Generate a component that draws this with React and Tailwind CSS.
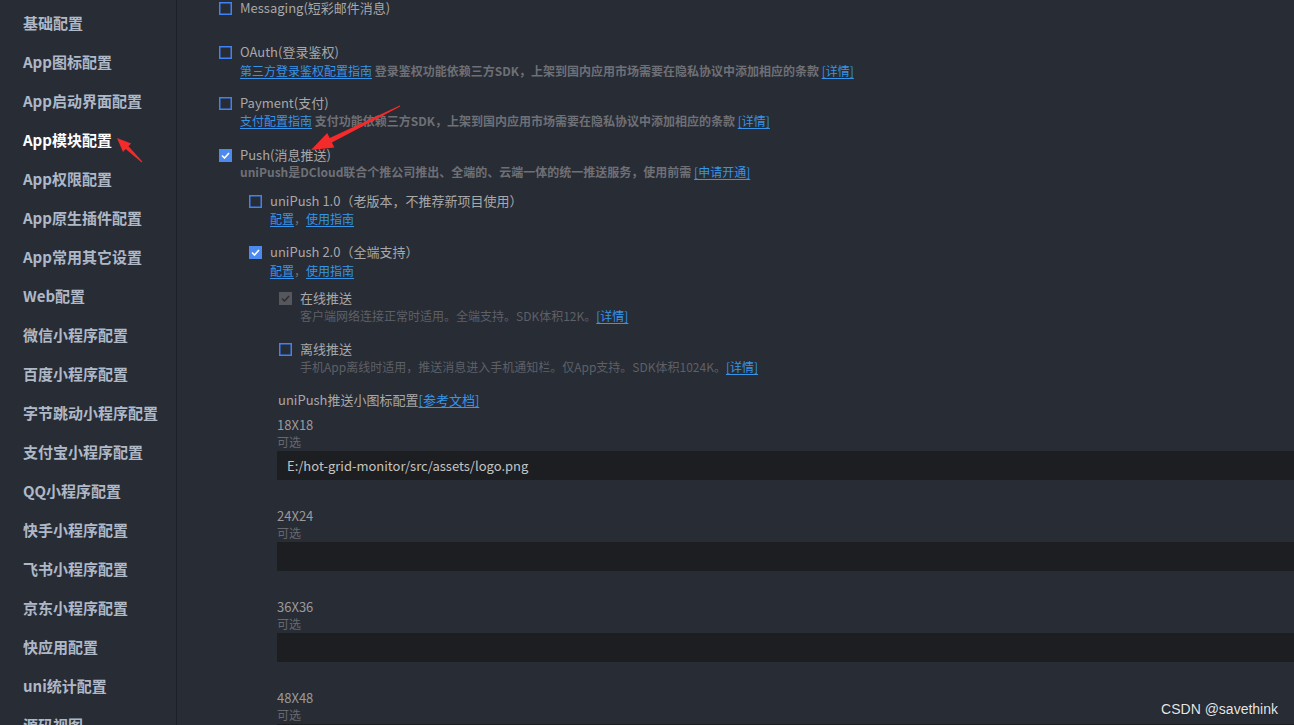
import React from "react";

const FONT = { fontFamily: '"Microsoft YaHei", "Noto Sans CJK SC", "Noto Sans", sans-serif' };

const sideItems = [
  "基础配置",
  "App图标配置",
  "App启动界面配置",
  "App模块配置",
  "App权限配置",
  "App原生插件配置",
  "App常用其它设置",
  "Web配置",
  "微信小程序配置",
  "百度小程序配置",
  "字节跳动小程序配置",
  "支付宝小程序配置",
  "QQ小程序配置",
  "快手小程序配置",
  "飞书小程序配置",
  "京东小程序配置",
  "快应用配置",
  "uni统计配置",
  "源码视图",
];

function Box({ state }) {
  if (state === "checked") {
    return (
      <span className="flex h-[13px] w-[13px] shrink-0 items-center justify-center bg-[#4d8af0]">
        <svg width="9" height="7" viewBox="0 0 9 7" fill="none">
          <path d="M1 3.5 L3.5 6 L8 1" stroke="#ffffff" strokeWidth="1.6" />
        </svg>
      </span>
    );
  }
  if (state === "disabled") {
    return (
      <span className="flex h-[13px] w-[13px] shrink-0 items-center justify-center bg-[#55575c]">
        <svg width="9" height="7" viewBox="0 0 9 7" fill="none">
          <path d="M1 3.5 L3.5 6 L8 1" stroke="#2c2e33" strokeWidth="1.6" />
        </svg>
      </span>
    );
  }
  return (
    <svg className="block shrink-0" width="13" height="13" viewBox="0 0 13 13">
      <rect x="0.75" y="0.75" width="11.5" height="11.5" fill="none" stroke="#3f82f7" strokeWidth="1.5" />
    </svg>
  );
}

function Row({ state, children, className = "" }) {
  return (
    <div className={`flex h-[18px] items-center gap-[8px] ${className}`}>
      <Box state={state} />
      <span className="text-[13px] leading-[18px] text-[#a8a8a8] whitespace-nowrap">{children}</span>
    </div>
  );
}

function Link({ children }) {
  return <span className="font-normal text-[#3794ea] underline underline-offset-2">{children}</span>;
}

function Field({ label, value, className = "" }) {
  return (
    <div className={className}>
      <div className="h-[18px] text-[13px] leading-[18px] text-[#9a9a9a]">{label}</div>
      <div className="h-[16px] text-[12px] leading-[16px] text-[#67696e]">可选</div>
      <div className="mt-[1px] flex h-[29px] items-center bg-[#1d1e22] pl-[10px] text-[13px] text-[#c4c4c4]">
        {value}
      </div>
    </div>
  );
}

export default function App() {
  return (
    <div className="relative flex h-[725px] w-[1294px] overflow-hidden bg-[#282c35]" style={FONT}>
      {/* Sidebar */}
      <div className="w-[177px] shrink-0 border-r border-[#1e2027] pt-[4px]">
        {sideItems.map((t, i) => (
          <div
            key={t}
            className={`flex h-[39px] items-center pl-[23px] text-[15px] font-bold whitespace-nowrap ${
              i === 3 ? "text-white" : "text-[#aeb8c7]"
            }`}
          >
            {t}
          </div>
        ))}
      </div>

      {/* Main */}
      <div className="flex-1 pl-[42px]">
        <Row state="unchecked" className="-mt-px">Messaging(短彩邮件消息)</Row>

        <Row state="unchecked" className="mt-[26px]">OAuth(登录鉴权)</Row>
        <div className="mt-[1px] h-[18px] pl-[21px] text-[12px] leading-[18px] font-bold text-[#6e7075] whitespace-nowrap">
          <Link>第三方登录鉴权配置指南</Link> 登录鉴权功能依赖三方SDK，上架到国内应用市场需要在隐私协议中添加相应的条款 <Link>[详情]</Link>
        </div>

        <Row state="unchecked" className="mt-[14px]">Payment(支付)</Row>
        <div className="h-[18px] pl-[21px] text-[12px] leading-[18px] font-bold text-[#6e7075] whitespace-nowrap">
          <Link>支付配置指南</Link> 支付功能依赖三方SDK，上架到国内应用市场需要在隐私协议中添加相应的条款 <Link>[详情]</Link>
        </div>

        <Row state="checked" className="mt-[16px]">Push(消息推送)</Row>
        <div className="-mt-px h-[18px] pl-[21px] text-[12px] leading-[18px] font-bold text-[#6e7075] whitespace-nowrap">
          uniPush是DCloud联合个推公司推出、全端的、云端一体的统一推送服务，使用前需 <Link>[申请开通]</Link>
        </div>

        <div className="pl-[30px]">
          <Row state="unchecked" className="mt-[11px]">uniPush 1.0（老版本，不推荐新项目使用）</Row>
          <div className="h-[18px] pl-[21px] text-[12px] leading-[18px] text-[#6e7075]">
            <Link>配置</Link>，<Link>使用指南</Link>
          </div>

          <Row state="checked" className="mt-[15px]">uniPush 2.0（全端支持）</Row>
          <div className="mt-[1px] h-[18px] pl-[21px] text-[12px] leading-[18px] text-[#6e7075]">
            <Link>配置</Link>，<Link>使用指南</Link>
          </div>

          <div className="pl-[30px]">
            <Row state="disabled" className="mt-[9px]">在线推送</Row>
            <div className="h-[18px] pl-[21px] text-[12px] leading-[18px] text-[#5e6067] whitespace-nowrap">
              客户端网络连接正常时适用。全端支持。SDK体积12K。<Link>[详情]</Link>
            </div>

            <Row state="unchecked" className="mt-[15px]">离线推送</Row>
            <div className="h-[18px] pl-[21px] text-[12px] leading-[18px] text-[#5e6067] whitespace-nowrap">
              手机App离线时适用，推送消息进入手机通知栏。仅App支持。SDK体积1024K。<Link>[详情]</Link>
            </div>
          </div>

          <div className="pl-[28px]">
            <div className="mt-[15px] h-[18px] pl-[1px] text-[13px] leading-[18px] text-[#a8a8a8] whitespace-nowrap">
              uniPush推送小图标配置<Link>[参考文档]</Link>
            </div>
            <Field className="mt-[7px]" label="18X18" value="E:/hot-grid-monitor/src/assets/logo.png" />
            <Field className="mt-[27px]" label="24X24" value="" />
            <Field className="mt-[27px]" label="36X36" value="" />
            <Field className="mt-[27px]" label="48X48" value="" />
          </div>
        </div>
      </div>

      {/* Annotation arrows */}
      <svg className="pointer-events-none absolute left-0 top-0" width="1294" height="725">
        <polygon
          fill="#f52a2a"
          points="400.2,106.4 331.9,142.4 334.4,147.4 311,150 327.2,133 329.7,137.9 399.8,105.6"
        />
        <polygon
          fill="#f52a2a"
          points="142.3,161.6 128.5,146.3 131.2,143.4 117,138 123,152 125.7,149.1 141.7,162.4"
        />
      </svg>

      {/* Watermark */}
      <div
        className="absolute right-[16px] top-[700px] text-[14px] leading-[18px] text-[#e6e6e6]"
        style={{ fontFamily: '"Liberation Sans", Arial, sans-serif', textShadow: "0 0 1px rgba(0,0,0,0.6)" }}
      >
        CSDN @savethink
      </div>
    </div>
  );
}
